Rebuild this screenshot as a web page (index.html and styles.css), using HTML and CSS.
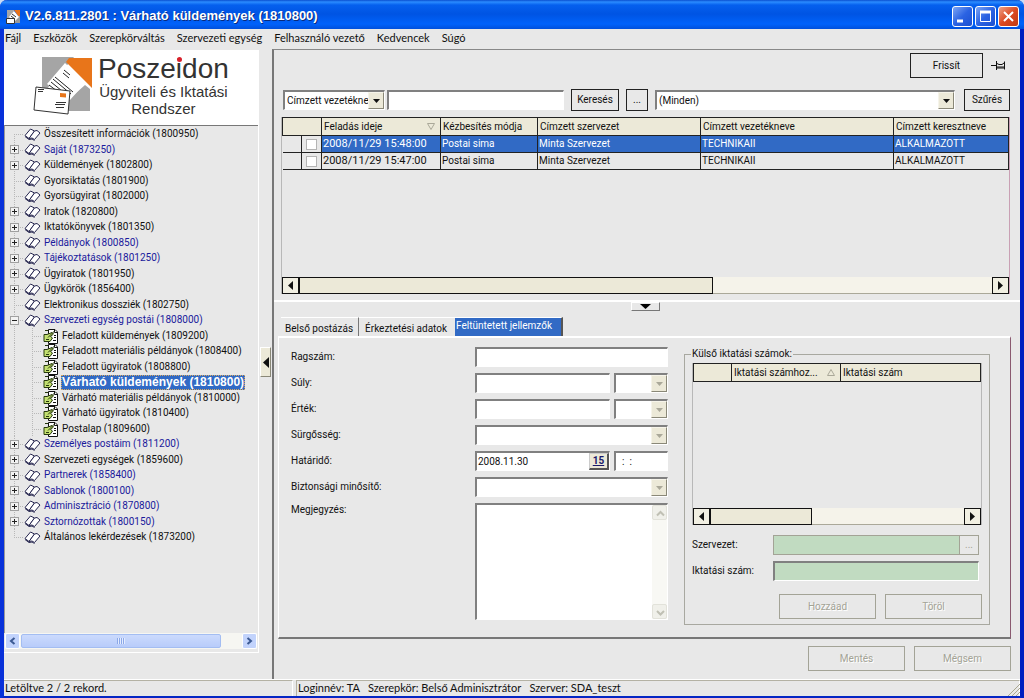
FILE: index.html
```html
<!DOCTYPE html>
<html lang="hu">

<head>
    <meta charset="utf-8">
    <title>V2.6.811.2801 : Várható küldemények (1810800)</title>
    <link rel="stylesheet" href="styles.css">
</head>

<body>
    <svg class="defs" width="0" height="0" aria-hidden="true">
        <symbol id="book" viewBox="0 0 17 13">
            <path d="M1 7.500 6.500 1 10.500 3 5 10.500Z" fill="#fff" stroke="#26264f" />
            <path d="M5 10.500 10.500 3 13 2.500 16 5 10.500 11.500 8 10Z" fill="#fff" stroke="#26264f" />
            <path d="M1 8.500 5 11.500 8 11 10.500 12.500" fill="none" stroke="#26264f" />
        </symbol>
        <symbol id="form" viewBox="0 0 16 16">
            <path d="M5.500 1.500H12L14.500 4V15.500H5.500Z" fill="#fff" stroke="#111" />
            <path d="M11.500 1.500V4.500H14.500M11 7.500H13M11 9.500H13M10 12.500H13" stroke="#111" fill="none" />
            <path d="M1 6.500H4L9 4.500 10.500 6 7.500 8.500 9.500 10 7 13.500H1Z" fill="#c3e070" stroke="#26380c" />
            <path d="M5 9.500 11.500 3M3 11.500H6M2 2.500H5" stroke="#26380c" fill="none" />
        </symbol>
        <symbol id="down" viewBox="0 0 7 4">
            <path d="M0 0H7L3.500 4Z" fill="currentColor" />
        </symbol>
        <symbol id="left" viewBox="0 0 5 9">
            <path d="M5 0V9L0 4.500Z" fill="currentColor" />
        </symbol>
        <symbol id="right" viewBox="0 0 5 9">
            <path d="M0 0V9L5 4.500Z" fill="currentColor" />
        </symbol>
    </svg>

    <div class="window">
        <header class="titlebar">
            <svg class="app-icon" width="15" height="15" viewBox="0 0 15 15" aria-hidden="true">
                <path d="M1 1H8V14H1Z" fill="#a6a6a6" />
                <path d="M8 1H14V10Z" fill="#e8731a" />
                <path d="M8 7H14V14H8Z" fill="#999" />
                <path d="M3 8 8 2 13 8 8 13Z" fill="#fff" />
                <path d="M6 5 10 8M5 7 9 10" stroke="#333" />
                <path d="M.5 9.500H8.500V14.500H.5Z" fill="#fff" stroke="#333" />
            </svg>
            <h1>V2.6.811.2801 : Várható küldemények (1810800)</h1>
            <div class="caption-buttons">
                <button class="caption" aria-label="Kis méret">
                    <svg width="19" height="19"><path d="M4 14H10" stroke="#fff" stroke-width="3" /></svg>
                </button>
                <button class="caption" aria-label="Teljes méret">
                    <svg width="19" height="19"><path d="M4.500 5V14.500H14.500V5" stroke="#fff" fill="none" /><path d="M4 5H15" stroke="#fff" stroke-width="3" /></svg>
                </button>
                <button class="caption caption-close" aria-label="Bezárás">
                    <svg width="19" height="19"><path d="M5 5 14 14M14 5 5 14" stroke="#fff" stroke-width="2" /></svg>
                </button>
            </div>
        </header>

        <nav class="menubar">
            <a href="#">Fájl</a>
            <a href="#">Eszközök</a>
            <a href="#">Szerepkörváltás</a>
            <a href="#">Szervezeti egység</a>
            <a href="#">Felhasználó vezető</a>
            <a href="#">Kedvencek</a>
            <a href="#">Súgó</a>
        </nav>

        <div class="workspace">
            <aside class="sidebar">
                <div class="logo">
                    <svg width="62" height="62" viewBox="0 0 62 62" aria-hidden="true">
                        <path d="M9 2H30L41 2 9 40Z" fill="#a5a5a5" />
                        <path d="M36 3H59V33L33 7Z" fill="#e8751a" />
                        <path d="M52 30 57 34V56H34V46Z" fill="#a5a5a5" />
                        <path d="M32 8 52 28 37 45 14 29Z" fill="#fff" />
                        <path d="M31 15 37 20M30 18 36 23M22 22 40 37M20 24 38 39M18 27 34 40M16 30 28 39" stroke="#222" stroke-width="1" fill="none" />
                        <path d="M3 32 37 36 35 59 1 55Z" fill="#fff" stroke="#333" />
                        <path d="M5 34.500H11M5 36.500H10M23 47.500H33M22 49.500H32M23 52.500H31" stroke="#333" />
                        <path d="M27 38 33 38.500V42.500L27 42Z" fill="#e8751a" />
                    </svg>
                    <div class="logo-text">
                        <div class="logo-name">Posze<span class="logo-i">i</span>don</div>
                        <div>Ügyviteli és Iktatási</div>
                        <div>Rendszer</div>
                    </div>
                </div>

                <ul class="tree">
                    <li><svg class="book"><use href="#book" /></svg><a href="#">Összesített információk (1800950)</a></li>
                    <li class="group unread"><button class="toggle" aria-label="Kibontás"></button><svg class="book"><use href="#book" /></svg><a href="#">Saját (1873250)</a></li>
                    <li class="group"><button class="toggle" aria-label="Kibontás"></button><svg class="book"><use href="#book" /></svg><a href="#">Küldemények (1802800)</a></li>
                    <li><svg class="book"><use href="#book" /></svg><a href="#">Gyorsiktatás (1801900)</a></li>
                    <li><svg class="book"><use href="#book" /></svg><a href="#">Gyorsügyirat (1802000)</a></li>
                    <li class="group"><button class="toggle" aria-label="Kibontás"></button><svg class="book"><use href="#book" /></svg><a href="#">Iratok (1820800)</a></li>
                    <li class="group"><button class="toggle" aria-label="Kibontás"></button><svg class="book"><use href="#book" /></svg><a href="#">Iktatókönyvek (1801350)</a></li>
                    <li class="group unread"><button class="toggle" aria-label="Kibontás"></button><svg class="book"><use href="#book" /></svg><a href="#">Példányok (1800850)</a></li>
                    <li class="group unread"><button class="toggle" aria-label="Kibontás"></button><svg class="book"><use href="#book" /></svg><a href="#">Tájékoztatások (1801250)</a></li>
                    <li class="group"><button class="toggle" aria-label="Kibontás"></button><svg class="book"><use href="#book" /></svg><a href="#">Ügyiratok (1801950)</a></li>
                    <li class="group"><button class="toggle" aria-label="Kibontás"></button><svg class="book"><use href="#book" /></svg><a href="#">Ügykörök (1856400)</a></li>
                    <li><svg class="book"><use href="#book" /></svg><a href="#">Elektronikus dossziék (1802750)</a></li>
                    <li class="group unread"><button class="toggle open" aria-label="Összecsukás"></button><svg class="book"><use href="#book" /></svg><a href="#">Szervezeti egység postái (1808000)</a></li>
                    <li class="sub"><svg class="form-icon"><use href="#form" /></svg><a href="#">Feladott küldemények (1809200)</a></li>
                    <li class="sub"><svg class="form-icon"><use href="#form" /></svg><a href="#">Feladott materiális példányok (1808400)</a></li>
                    <li class="sub"><svg class="form-icon"><use href="#form" /></svg><a href="#">Feladott ügyiratok (1808800)</a></li>
                    <li class="sub"><svg class="form-icon"><use href="#form" /></svg><a href="#" class="current">Várható küldemények (1810800)</a></li>
                    <li class="sub"><svg class="form-icon"><use href="#form" /></svg><a href="#">Várható materiális példányok (1810000)</a></li>
                    <li class="sub"><svg class="form-icon"><use href="#form" /></svg><a href="#">Várható ügyiratok (1810400)</a></li>
                    <li class="sub"><svg class="form-icon"><use href="#form" /></svg><a href="#">Postalap (1809600)</a></li>
                    <li class="group unread"><button class="toggle" aria-label="Kibontás"></button><svg class="book"><use href="#book" /></svg><a href="#">Személyes postáim (1811200)</a></li>
                    <li class="group"><button class="toggle" aria-label="Kibontás"></button><svg class="book"><use href="#book" /></svg><a href="#">Szervezeti egységek (1859600)</a></li>
                    <li class="group unread"><button class="toggle" aria-label="Kibontás"></button><svg class="book"><use href="#book" /></svg><a href="#">Partnerek (1858400)</a></li>
                    <li class="group unread"><button class="toggle" aria-label="Kibontás"></button><svg class="book"><use href="#book" /></svg><a href="#">Sablonok (1800100)</a></li>
                    <li class="group unread"><button class="toggle" aria-label="Kibontás"></button><svg class="book"><use href="#book" /></svg><a href="#">Adminisztráció (1870800)</a></li>
                    <li class="group unread"><button class="toggle" aria-label="Kibontás"></button><svg class="book"><use href="#book" /></svg><a href="#">Sztornózottak (1800150)</a></li>
                    <li><svg class="book"><use href="#book" /></svg><a href="#">Általános lekérdezések (1873200)</a></li>
                </ul>

                <div class="xp-scroll">
                    <button aria-label="Balra"><svg width="7" height="8"><path d="M5.500 1 2 4 5.500 7" /></svg></button>
                    <div class="xp-thumb"><span></span></div>
                    <div class="xp-track"></div>
                    <button aria-label="Jobbra"><svg width="7" height="8"><path d="M1.500 1 5 4 1.500 7" /></svg></button>
                </div>
            </aside>

            <div class="splitter">
                <button aria-label="Fa elrejtése"><svg width="6" height="11"><use href="#left" /></svg></button>
            </div>

            <main class="content">
                <div class="list-pane">
                    <div class="actions">
                        <button class="btn refresh">Frissít</button>
                        <button class="pin" aria-label="Rögzítés">
                            <svg width="15" height="11" viewBox="0 0 15 11"><path d="M0 5.500H5M5.500 1V10M13.500 1.500V9.500M6 3.500 8 4.500H11L13 3M6 8H13M6 7H13" stroke="#111" fill="none" /></svg>
                        </button>
                    </div>

                    <form class="filters">
                        <div class="select field-select">
                            <select aria-label="Keresési mező"><option>Címzett vezetékneve</option></select>
                            <span class="arrow"><svg width="7" height="4"><use href="#down" /></svg></span>
                        </div>
                        <input class="search" type="text" aria-label="Keresett szöveg">
                        <button class="btn find" type="button">Keresés</button>
                        <button class="btn more" type="button">...</button>
                        <div class="select filter-select">
                            <select aria-label="Szűrő"><option>(Minden)</option></select>
                            <span class="arrow"><svg width="7" height="4"><use href="#down" /></svg></span>
                        </div>
                        <button class="btn filter" type="button">Szűrés</button>
                    </form>

                    <div class="grid">
                        <table>
                            <colgroup>
                                <col class="c-mark">
                                <col class="c-check">
                                <col class="c-date">
                                <col class="c-mode">
                                <col class="c-org">
                                <col class="c-last">
                                <col class="c-first">
                            </colgroup>
                            <thead>
                                <tr>
                                    <th colspan="2"></th>
                                    <th><div class="sorted">Feladás ideje <svg width="8" height="7"><path d="M.5.5H7.500L4 6.500Z" /></svg></div></th>
                                    <th>Kézbesítés módja</th>
                                    <th>Címzett szervezet</th>
                                    <th>Címzett vezetékneve</th>
                                    <th>Címzett keresztneve</th>
                                </tr>
                            </thead>
                            <tbody>
                                <tr class="selected">
                                    <td></td>
                                    <td><input type="checkbox" aria-label="1. sor"></td>
                                    <td class="when">2008/11/29 15:48:00</td>
                                    <td>Postai sima</td>
                                    <td>Minta Szervezet</td>
                                    <td>TECHNIKAII</td>
                                    <td>ALKALMAZOTT</td>
                                </tr>
                                <tr>
                                    <td></td>
                                    <td><input type="checkbox" aria-label="2. sor"></td>
                                    <td class="when">2008/11/29 15:47:00</td>
                                    <td>Postai sima</td>
                                    <td>Minta Szervezet</td>
                                    <td>TECHNIKAII</td>
                                    <td>ALKALMAZOTT</td>
                                </tr>
                            </tbody>
                        </table>
                        <div class="scroll">
                            <button aria-label="Balra"><svg width="5" height="9"><use href="#left" /></svg></button>
                            <div class="thumb wide"></div>
                            <div class="track"></div>
                            <button aria-label="Jobbra"><svg width="5" height="9"><use href="#right" /></svg></button>
                        </div>
                    </div>
                </div>

                <div class="detail-pane">
                    <button class="collapse" aria-label="Részletek elrejtése"><svg width="11" height="5" viewBox="0 0 7 4" preserveAspectRatio="none"><path d="M0 0H7L3.500 4Z" /></svg></button>

                    <div class="tabs" role="tablist">
                        <button role="tab">Belső postázás</button>
                        <button role="tab">Érkeztetési adatok</button>
                        <button role="tab" class="active" aria-selected="true">Feltüntetett jellemzők</button>
                    </div>

                    <form class="tab-panel">
                        <div class="fields">
                            <label for="ragszam">Ragszám:</label>
                            <input id="ragszam" type="text">

                            <label for="suly">Súly:</label>
                            <div class="pair">
                                <input id="suly" type="text">
                                <div class="select off"><select aria-label="Súly egysége" disabled></select><span class="arrow"><svg width="7" height="4"><use href="#down" /></svg></span></div>
                            </div>

                            <label for="ertek">Érték:</label>
                            <div class="pair">
                                <input id="ertek" type="text">
                                <div class="select off"><select aria-label="Pénznem" disabled></select><span class="arrow"><svg width="7" height="4"><use href="#down" /></svg></span></div>
                            </div>

                            <label for="surgosseg">Sürgősség:</label>
                            <div class="select off"><select id="surgosseg" disabled></select><span class="arrow"><svg width="7" height="4"><use href="#down" /></svg></span></div>

                            <label for="hatarido">Határidő:</label>
                            <div class="pair">
                                <div class="date">
                                    <input id="hatarido" type="text" value="2008.11.30">
                                    <button type="button">15</button>
                                </div>
                                <input class="time" type="text" value=":  :" aria-label="Időpont">
                            </div>

                            <label for="minosito">Biztonsági minősítő:</label>
                            <div class="select off"><select id="minosito" disabled></select><span class="arrow"><svg width="7" height="4"><use href="#down" /></svg></span></div>

                            <label class="top" for="megjegyzes">Megjegyzés:</label>
                            <div class="memo">
                                <textarea id="megjegyzes"></textarea>
                                <div class="memo-scroll">
                                    <svg width="15" height="15"><path d="M4 9.500 7.500 6 11 9.500" /></svg>
                                    <svg width="15" height="15"><path d="M4 6 7.500 9.500 11 6" /></svg>
                                </div>
                            </div>
                        </div>

                        <fieldset class="external">
                            <legend>Külső iktatási számok:</legend>
                            <div class="grid small">
                                <table>
                                    <colgroup>
                                        <col class="c-blank">
                                        <col class="c-number">
                                        <col>
                                    </colgroup>
                                    <thead>
                                        <tr>
                                            <th></th>
                                            <th><div class="sorted">Iktatási számhoz... <svg width="8" height="7"><path d="M.5 6.500H7.500L4 .5Z" /></svg></div></th>
                                            <th>Iktatási szám</th>
                                        </tr>
                                    </thead>
                                </table>
                                <div class="scroll">
                                    <button type="button" aria-label="Balra"><svg width="5" height="9"><use href="#left" /></svg></button>
                                    <div class="thumb"></div>
                                    <div class="track"></div>
                                    <button type="button" aria-label="Jobbra"><svg width="5" height="9"><use href="#right" /></svg></button>
                                </div>
                            </div>
                            <div class="ext-row">
                                <label for="szervezet">Szervezet:</label>
                                <div class="browse">
                                    <input id="szervezet" type="text" disabled>
                                    <button type="button" disabled>...</button>
                                </div>
                            </div>
                            <div class="ext-row">
                                <label for="iktatasi">Iktatási szám:</label>
                                <input id="iktatasi" class="green" type="text" disabled>
                            </div>
                            <div class="ext-buttons">
                                <button class="btn" type="button" disabled>Hozzáad</button>
                                <button class="btn" type="button" disabled>Töröl</button>
                            </div>
                        </fieldset>
                    </form>

                    <div class="form-buttons">
                        <button class="btn" disabled>Mentés</button>
                        <button class="btn" disabled>Mégsem</button>
                    </div>
                </div>
            </main>
        </div>

        <footer class="statusbar">
            <div class="status-count">Letöltve 2 / 2 rekord.</div>
            <div class="status-login">Loginnév: TA&nbsp;&nbsp; Szerepkör: Belső Adminisztrátor&nbsp;&nbsp; Szerver: SDA_teszt</div>
            <svg class="grip" width="13" height="13"><path d="M1 13 13 1M5 13 13 5M9 13 13 9" stroke="#a9a78f" /></svg>
        </footer>
    </div>
</body>

</html>
```

FILE: styles.css
```css
* {
    box-sizing: border-box;
}

body {
    margin: 0;
    background: #c9dcf5;
    font: 10px/14px Roboto, 'Liberation Sans', sans-serif;
    color: #111;
}

button,
input,
select,
textarea {
    font: inherit;
    color: inherit;
    margin: 0;
    padding: 0;
    border: 0;
    border-radius: 0;
    background: none;
    min-width: 0;
}

button {
    display: flex;
    align-items: center;
    justify-content: center;
}

a {
    color: inherit;
    text-decoration: none;
}

svg {
    display: block;
    flex: none;
}

.defs {
    position: absolute;
}

.window {
    display: flex;
    flex-direction: column;
    min-height: 100vh;
    border: solid #0831d9;
    border-width: 0 4px 4px;
    border-right-color: #001ec0;
    border-bottom-color: #0526c4;
    border-radius: 7px 7px 0 0;
    background: #e8e8e8;
}

/* title bar */

.titlebar {
    display: flex;
    align-items: center;
    gap: 4px;
    height: 29px;
    margin: 0 -4px;
    padding: 3px 5px 0 6px;
    border-radius: 7px 7px 0 0;
    background: linear-gradient(#0a4fd0, #2b8cff 2px, #0560ee 5px, #0054e3 14px, #0062fb 24px, #0050dc);
    color: #fff;
}

.titlebar h1 {
    flex: 1;
    margin: 0;
    font: bold 13px/16px 'Liberation Sans', Arial, sans-serif;
    text-shadow: 1px 1px #0a2a7a;
}

.caption-buttons {
    display: flex;
    gap: 2px;
}

.caption {
    width: 21px;
    height: 21px;
    border: 1px solid #fff;
    border-radius: 3px;
    background: linear-gradient(135deg, #7ea6f4, #2b63e3 50%, #1b4fd0);
}

.caption-close {
    background: linear-gradient(135deg, #eea187, #dc4a22 50%, #c03a12);
}

/* menu */

.menubar {
    display: flex;
    gap: 12px;
    height: 20px;
    padding: 2px 1px;
    font: 11px/14px Lato, sans-serif;
}

/* sidebar */

.workspace {
    display: flex;
    flex: 1;
}

.sidebar {
    display: flex;
    flex-direction: column;
    width: 255px;
    margin: 1px 0 26px;
    border-bottom: 1px solid #fff;
    border-right: 1px solid #fff;
}

.logo {
    display: flex;
    gap: 3px;
    height: 75px;
    padding: 5px 0 0 29px;
    background: #fff;
}

.logo-text {
    font: 15px/17px 'Liberation Sans', Arial, sans-serif;
    text-align: center;
    color: #333;
}

.logo-name {
    font-size: 28px;
    line-height: 28px;
}

.logo-i {
    position: relative;
}

.logo-i::after {
    content: '';
    position: absolute;
    top: 4px;
    left: 1px;
    width: 5px;
    height: 5px;
    border-radius: 3px;
    background: #d8202c;
}

.tree {
    flex: 1;
    margin: 0;
    padding: 0;
    border-top: 1px solid #777;
    border-left: 1px solid #999;
    list-style: none;
}

.tree li {
    display: flex;
    align-items: center;
    height: 15px;
    padding-left: 19px;
    background:
        repeating-linear-gradient(#b8b8b8 0 1px, transparent 1px 2px) 9px 0 / 1px 100% no-repeat,
        repeating-linear-gradient(90deg, #b8b8b8 0 1px, transparent 1px 2px) 9px 8px / 10px 1px no-repeat;
}

.tree li:nth-child(odd) {
    height: 16px;
}

.tree li:first-child {
    background-position: 9px 8px, 9px 8px;
}

.tree li:last-child {
    background-size: 1px 8px, 10px 1px;
}

.tree .group {
    padding-left: 5px;
}

.tree .sub {
    padding-left: 38px;
    background:
        repeating-linear-gradient(#b8b8b8 0 1px, transparent 1px 2px) 9px 0 / 1px 100% no-repeat,
        repeating-linear-gradient(#b8b8b8 0 1px, transparent 1px 2px) 27px 0 / 1px 100% no-repeat,
        repeating-linear-gradient(90deg, #b8b8b8 0 1px, transparent 1px 2px) 27px 8px / 10px 1px no-repeat;
}

.tree .unread {
    color: #1a1a9c;
}

.tree a {
    padding: 0 1px;
    white-space: nowrap;
}

.tree .current {
    outline: 1px dotted #d8a860;
    outline-offset: -1px;
    background: #316ac5;
    color: #fff;
    font: bold 12px/15px 'Liberation Sans', Arial, sans-serif;
}

.toggle {
    width: 9px;
    height: 9px;
    margin-right: 5px;
    border: 1px solid #a0a0a0;
    background:
        linear-gradient(#222, #222) 50% 50% / 5px 1px no-repeat,
        linear-gradient(#222, #222) 50% 50% / 1px 5px no-repeat,
        #f2f2f2;
}

.toggle.open {
    background: linear-gradient(#222, #222) 50% 50% / 5px 1px no-repeat, #f2f2f2;
}

.book {
    width: 17px;
    height: 13px;
    margin-right: 2px;
}

.form-icon {
    width: 16px;
    height: 16px;
    margin-right: 2px;
}

.xp-scroll {
    display: flex;
    height: 16px;
    margin: 0 1px 3px;
    background: #f6f6f2;
}

.xp-scroll button {
    width: 15px;
    border: 1px solid #fff;
    border-radius: 2px;
    background: #c2d3fc;
}

.xp-scroll path {
    fill: none;
    stroke: #3c5a94;
    stroke-width: 2;
}

.xp-thumb {
    display: flex;
    align-items: center;
    justify-content: center;
    flex: 10;
    margin: 1px;
    border: 1px solid #a3bdf2;
    border-radius: 2px;
    background: linear-gradient(#cbdafd, #b8ccfa);
}

.xp-thumb span {
    width: 8px;
    height: 6px;
    background: repeating-linear-gradient(90deg, #8ba8e8 0 1px, #e4ecff 1px 2px);
}

.xp-track {
    flex: 1;
}

.splitter {
    display: flex;
    align-items: center;
    width: 13px;
    padding: 0 1px 4px;
}

.splitter button {
    width: 11px;
    height: 30px;
    border: 1px solid #fff;
    border-right-color: #8a8878;
    border-bottom-color: #8a8878;
    background: #ece9d8;
}

/* right side */

.content {
    display: flex;
    flex-direction: column;
    flex: 1;
    border-top: 1px solid #888;
    border-left: 2px solid #777;
    min-width: 0;
}

.list-pane {
    display: flex;
    flex-direction: column;
    flex: 1;
    padding: 3px 10px 6px 7px;
    border-bottom: 2px solid #fff;
}

.actions {
    display: flex;
    justify-content: flex-end;
    gap: 8px;
    margin-bottom: 11px;
    padding-right: 4px;
}

.btn {
    height: 22px;
    border: 1px solid #222;
}

.btn:disabled {
    border-color: #a3a396;
    color: #a3a396;
    text-shadow: 1px 1px #fff;
}

.refresh {
    width: 73px;
    height: 25px;
}

.filters {
    display: flex;
    align-items: center;
    margin-bottom: 6px;
    padding-left: 2px;
}

.field-select {
    width: 102px;
    margin-right: 2px;
}

.search {
    width: 177px;
    margin-right: 7px;
}

.find {
    width: 48px;
    margin-right: 7px;
}

.more {
    width: 22px;
    margin-right: 7px;
}

.filter-select {
    flex: 1;
    margin-right: 9px;
}

.filter {
    width: 46px;
}

input[type=text],
.select,
.memo,
.date {
    height: 20px;
    border: solid 1px #fff;
    border-top: 2px solid #808080;
    border-left: 2px solid #808080;
    background: #fff;
}

input[type=text] {
    padding: 0 2px;
}

.select {
    display: flex;
    min-width: 0;
}

.select select {
    flex: 1;
    width: 0;
    padding-left: 2px;
    appearance: none;
    outline: 0;
}

.arrow {
    display: flex;
    align-items: center;
    justify-content: center;
    width: 16px;
    border: 1px solid #f6f4ea;
    border-right-color: #8a8878;
    border-bottom-color: #8a8878;
    background: #ece9d8;
}

.off .arrow {
    color: #aaa899;
}

/* grids */

.grid {
    display: flex;
    flex-direction: column;
    justify-content: space-between;
    flex: 1;
    min-height: 177px;
    border-right: 1px solid #c9a0b4;
    border-left: 1px solid #b8b8b8;
}

.grid table {
    width: 100%;
    table-layout: fixed;
    border-collapse: collapse;
}

.grid th {
    height: 18px;
    padding: 0 2px;
    border: 1px solid #222;
    background: #ece9d8;
    font-weight: normal;
    text-align: left;
    white-space: nowrap;
}

.grid td {
    height: 17px;
    padding: 0 1px;
    border: 1px solid #222;
    white-space: nowrap;
    line-height: 14px;
}

.grid td:first-child {
    border-left: 0;
    border-top: 0;
}

.grid .when {
    font-size: 11px;
}

.selected td:nth-child(n + 3) {
    background: #316ac5;
    color: #fff;
}

.grid input {
    display: block;
    appearance: none;
    width: 11px;
    height: 11px;
    margin: 0 auto;
    border: 1px solid #b4b4b4;
    background: #fff;
}

.sorted {
    display: flex;
    align-items: center;
    justify-content: space-between;
    padding-right: 3px;
}

.sorted path {
    fill: none;
    stroke: #aaa899;
}

.c-mark {
    width: 19px;
}

.c-check {
    width: 20px;
}

.c-date {
    width: 119px;
}

.c-mode {
    width: 97px;
}

.c-org {
    width: 163px;
}

.c-last {
    width: 193px;
}

.scroll {
    display: flex;
    height: 17px;
    border-bottom: 1px solid #aaa899;
    background: #f5f3ea;
}

.scroll button {
    width: 17px;
    height: 17px;
    border: 1px solid #111;
    background: #f1efe2;
}

.thumb {
    width: 102px;
    height: 17px;
    border: 1px solid #111;
    background: #ece9d8;
}

.thumb.wide {
    width: 57%;
}

.track {
    flex: 1;
}

/* details */

.detail-pane {
    display: flex;
    flex-direction: column;
    padding: 0 9px 8px 4px;
}

.collapse {
    width: 29px;
    height: 9px;
    margin: 0 0 6px 353px;
    border: 1px solid #fff;
    border-right-color: #777;
    border-bottom-color: #777;
}

.tabs {
    display: flex;
    padding-left: 3px;
}

.tabs button {
    height: 19px;
    padding: 3px 5px 0 4px;
    border-right: 1px solid #777;
    border-top: 1px solid #fff;
}

.tabs button:nth-child(2) {
    padding: 3px 8px 0 6px;
    border-right: 0;
}

.tabs .active {
    padding: 0 9px 2px 1px;
    border-right: 2px solid #555;
    background: #316ac5;
    color: #fff;
}

.tab-panel {
    display: grid;
    grid-template-columns: 1fr 306px;
    gap: 16px;
    padding: 9px 20px 12px 12px;
    border: 1px solid #fff;
    border-top-width: 2px;
    border-right: 1px solid #8a5a70;
    border-bottom: 2px solid #777;
}

.fields {
    display: grid;
    grid-template-columns: 184px 1fr;
    grid-auto-rows: 20px;
    align-content: start;
    align-items: center;
    row-gap: 6px;
}

.fields .top {
    align-self: start;
}

.pair {
    display: grid;
    grid-template-columns: 1fr 54px;
    gap: 4px;
}

.date {
    display: flex;
}

.date input[type=text] {
    flex: 1;
    width: 0;
    height: 17px;
    padding: 0 1px;
    border: 0;
}

.date button {
    width: 20px;
    border: 1px solid #ccc;
    border-right: 2px solid #555;
    border-bottom: 2px solid #555;
    background: #ece9d8;
    color: #1a1a6a;
    font-weight: bold;
    line-height: 10px;
    text-decoration: underline;
}

input.time {
    padding-left: 6px;
    white-space: pre;
}

.memo {
    display: flex;
    align-self: start;
    height: 117px;
}

.memo textarea {
    flex: 1;
    width: 0;
    resize: none;
}

.memo-scroll {
    display: flex;
    flex-direction: column;
    justify-content: space-between;
    background: #f8f8f4;
}

.memo-scroll svg {
    border: 1px solid #e2e2da;
    border-radius: 2px;
    background: #f0f0ea;
}

.memo-scroll path {
    fill: none;
    stroke: #c0c0b4;
    stroke-width: 2;
}

.external {
    display: flex;
    flex-direction: column;
    min-width: 0;
    margin: 0;
    padding: 2px 7px 5px;
    border: 1px solid #a8a8a0;
}

.external legend {
    margin-left: -1px;
    padding: 0 1px;
}

.grid.small {
    flex: none;
    min-height: 162px;
    border-right-color: #b8b8b8;
    margin-bottom: 10px;
}

.c-blank {
    width: 38px;
}

.c-number {
    width: 109px;
}

.ext-row {
    display: grid;
    grid-template-columns: 81px 1fr;
    align-items: center;
    margin-bottom: 6px;
    padding-right: 3px;
}

.browse {
    display: flex;
    height: 20px;
    border: 1px solid #a3a396;
}

.browse input[type=text] {
    flex: 1;
    width: 0;
    height: 18px;
    border: 0;
    background: #c1dbc1;
}

.browse button {
    width: 19px;
    border-left: 1px solid #a3a396;
    color: #a3a396;
}

input[type=text].green {
    background: #c1dbc1;
}

.ext-buttons,
.form-buttons {
    display: flex;
    justify-content: flex-end;
    gap: 9px;
    margin-top: 7px;
}

.ext-buttons .btn,
.form-buttons .btn {
    width: 97px;
    height: 25px;
}

/* status bar */

.statusbar {
    display: flex;
    align-items: flex-end;
    gap: 3px;
    height: 17px;
    border-top: 1px solid #fff;
    font: 11px/14px Lato, sans-serif;
}

.statusbar div {
    height: 16px;
    padding: 0 1px;
    border-top: 1px solid #b4b2a4;
    border-right: 1px solid #fff;
}

.status-count {
    width: 289px;
}

.status-login {
    flex: 1;
    border-left: 1px solid #b4b2a4;
}

.grip {
    margin-left: -16px;
}
```
